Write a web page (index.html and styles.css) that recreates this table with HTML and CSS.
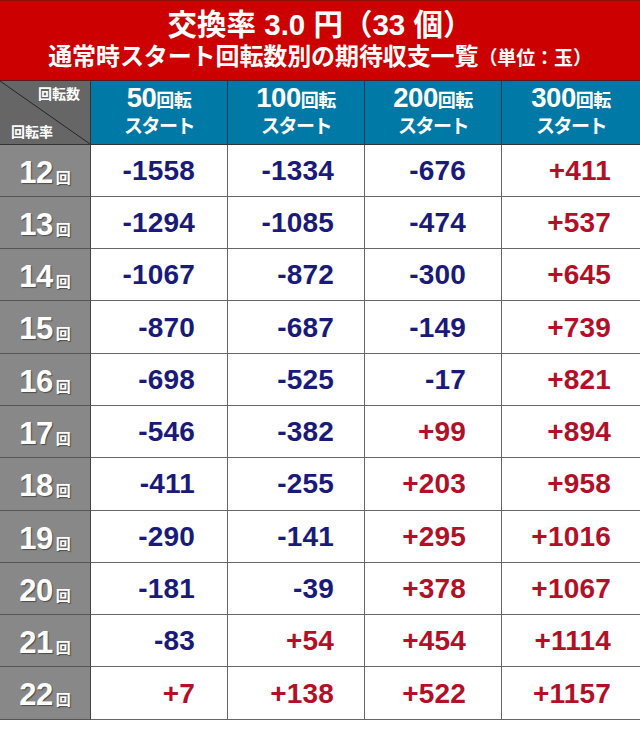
FILE: index.html
```html
<!DOCTYPE html>
<html lang="ja">
<head>
<meta charset="utf-8">
<title>交換率 3.0円</title>
<link rel="stylesheet" href="styles.css">
</head>
<body>
<div class="sheet">
  <div class="title">
    <div class="t1">交換率 3.0 円（33 個）</div>
    <div class="t2">通常時スタート回転数別の期待収支一覧<span class="unit">（単位：玉）</span></div>
  </div>
  <div class="grid">
    <div class="corner"><span class="c-top">回転数</span><span class="c-bot">回転率</span></div>
    <div class="head"><div class="h1"><span class="hn">50</span>回転</div><div class="h2">スタート</div></div>
    <div class="head"><div class="h1"><span class="hn">100</span>回転</div><div class="h2">スタート</div></div>
    <div class="head"><div class="h1"><span class="hn">200</span>回転</div><div class="h2">スタート</div></div>
    <div class="head last"><div class="h1"><span class="hn">300</span>回転</div><div class="h2">スタート</div></div>

    <div class="lab"><span class="ln">12</span><span class="lk">回</span></div>
    <div class="v c1 neg">-1558</div><div class="v c2 neg">-1334</div><div class="v c3 neg">-676</div><div class="v c4 pos">+411</div>

    <div class="lab"><span class="ln">13</span><span class="lk">回</span></div>
    <div class="v c1 neg">-1294</div><div class="v c2 neg">-1085</div><div class="v c3 neg">-474</div><div class="v c4 pos">+537</div>

    <div class="lab"><span class="ln">14</span><span class="lk">回</span></div>
    <div class="v c1 neg">-1067</div><div class="v c2 neg">-872</div><div class="v c3 neg">-300</div><div class="v c4 pos">+645</div>

    <div class="lab"><span class="ln">15</span><span class="lk">回</span></div>
    <div class="v c1 neg">-870</div><div class="v c2 neg">-687</div><div class="v c3 neg">-149</div><div class="v c4 pos">+739</div>

    <div class="lab"><span class="ln">16</span><span class="lk">回</span></div>
    <div class="v c1 neg">-698</div><div class="v c2 neg">-525</div><div class="v c3 neg">-17</div><div class="v c4 pos">+821</div>

    <div class="lab"><span class="ln">17</span><span class="lk">回</span></div>
    <div class="v c1 neg">-546</div><div class="v c2 neg">-382</div><div class="v c3 pos">+99</div><div class="v c4 pos">+894</div>

    <div class="lab"><span class="ln">18</span><span class="lk">回</span></div>
    <div class="v c1 neg">-411</div><div class="v c2 neg">-255</div><div class="v c3 pos">+203</div><div class="v c4 pos">+958</div>

    <div class="lab"><span class="ln">19</span><span class="lk">回</span></div>
    <div class="v c1 neg">-290</div><div class="v c2 neg">-141</div><div class="v c3 pos">+295</div><div class="v c4 pos">+1016</div>

    <div class="lab"><span class="ln">20</span><span class="lk">回</span></div>
    <div class="v c1 neg">-181</div><div class="v c2 neg">-39</div><div class="v c3 pos">+378</div><div class="v c4 pos">+1067</div>

    <div class="lab"><span class="ln">21</span><span class="lk">回</span></div>
    <div class="v c1 neg">-83</div><div class="v c2 pos">+54</div><div class="v c3 pos">+454</div><div class="v c4 pos">+1114</div>

    <div class="lab"><span class="ln">22</span><span class="lk">回</span></div>
    <div class="v c1 pos">+7</div><div class="v c2 pos">+138</div><div class="v c3 pos">+522</div><div class="v c4 pos">+1157</div>
  </div>
</div>
</body>
</html>
```
FILE: styles.css
```css
* { box-sizing: border-box; }
html, body { margin: 0; padding: 0; background: #fff; }
body {
  width: 640px;
  font-family: "Liberation Sans", "Noto Sans CJK JP", sans-serif;
  font-weight: bold;
}
.sheet { width: 640px; }

.title {
  height: 81px;
  background: #cc0000;
  border-top: 1px solid #8a1010;
  border-bottom: 1px solid #5a1a1a;
  color: #fff;
  text-align: center;
  padding-top: 8px;
}
.t1 {
  font-size: 29.5px;
  line-height: 32px;
  letter-spacing: 0;
}
.t2 {
  font-size: 24px;
  line-height: 32px;
  letter-spacing: -0.1px;
}
.t2 .unit { font-size: 19px; }

.grid {
  display: grid;
  grid-template-columns: 91px 137px 137px 137px 138px;
  grid-template-rows: 63.5px repeat(11, 52.3px);
}

.corner {
  display: flex;
  flex-direction: column;
  justify-content: space-between;
  padding: 5px 10px 4px 11px;
  color: #fff;
  font-size: 14px;
  line-height: 16px;
  background: linear-gradient(to top right, #666 calc(50% - 0.8px), #222 50%, #666 calc(50% + 0.8px));
  border-right: 1px solid #333;
  border-bottom: 1px solid #333;
}
.c-top { align-self: flex-end; }
.c-bot { align-self: flex-start; }

.head {
  background: #0079a6;
  color: #fff;
  border-right: 1px solid #1d3c52;
  border-bottom: 1px solid #333;
  display: flex;
  flex-direction: column;
  align-items: center;
  justify-content: center;
  padding-bottom: 2px;
}
.head.last { border-right: none; }
.h1 {
  font-size: 18px;
  line-height: 27px;
  letter-spacing: -0.5px;
}
.hn { font-size: 27.5px; letter-spacing: -0.5px; }
.h2 {
  font-size: 19px;
  line-height: 23px;
  letter-spacing: -1.5px;
}

.lab {
  background: #888;
  color: #fff;
  border-right: 1px solid #444;
  border-bottom: 1px solid #555;
  display: flex;
  align-items: baseline;
  justify-content: center;
  padding-top: 11px;
  text-shadow: 1px 1px 1px rgba(0,0,0,0.45);
}
.ln { font-size: 31px; line-height: 34px; letter-spacing: -0.5px; }
.lk { font-size: 15px; margin-left: 3px; }

.v {
  background: #fff;
  border-right: 1px solid #666;
  border-bottom: 1px solid #666;
  font-size: 28px;
  letter-spacing: 0.2px;
  display: flex;
  align-items: center;
  justify-content: flex-end;
  padding-top: 1px;
}
.c1 { padding-right: 32px; }
.c2 { padding-right: 30px; }
.c3 { padding-right: 35px; }
.c4 { padding-right: 29px; border-right: none; }
.neg { color: #1a1a7a; }
.pos { color: #b30f27; }
```
